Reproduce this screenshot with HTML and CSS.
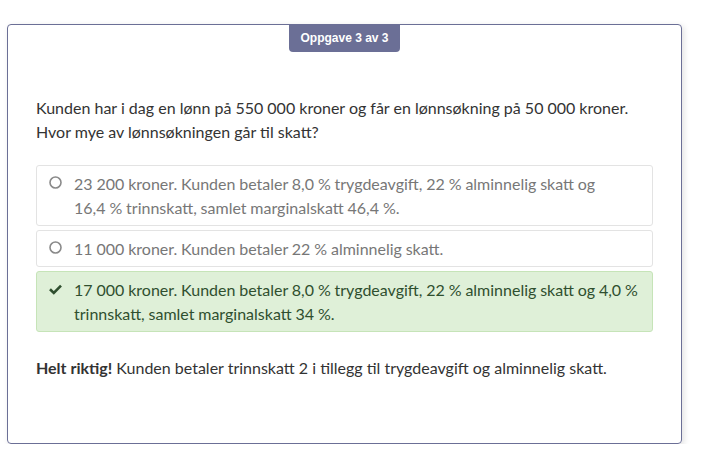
FILE: index.html
```html
<!DOCTYPE html>
<html lang="nb">
<head>
  <meta charset="UTF-8">
  <title>Oppgave 3 av 3</title>
  <link rel="stylesheet" href="styles.css">
</head>
<body>
  <div class="quiz-card">
    <div class="step-badge">Oppgave 3 av 3</div>

    <p class="question">Kunden har i dag en lønn på 550&#8239;000 kroner og får en lønnsøkning på 50&#8239;000 kroner.<br>Hvor mye av lønnsøkningen går til skatt?</p>

    <div class="options">
      <div class="option">
        <span class="opt-icon">
          <svg width="13" height="13" viewBox="0 0 13 13"><circle cx="6.5" cy="6.5" r="5.5" fill="none" stroke="#8a8a8a" stroke-width="1.6"/></svg>
        </span>
        <span class="opt-text">23&#8239;200 kroner. Kunden betaler 8,0&#8239;% trygdeavgift, 22&#8239;% alminnelig skatt og 16,4&#8239;% trinnskatt, samlet marginalskatt 46,4&#8239;%.</span>
      </div>
      <div class="option">
        <span class="opt-icon">
          <svg width="13" height="13" viewBox="0 0 13 13"><circle cx="6.5" cy="6.5" r="5.5" fill="none" stroke="#8a8a8a" stroke-width="1.6"/></svg>
        </span>
        <span class="opt-text">11&#8239;000 kroner. Kunden betaler 22&#8239;% alminnelig skatt.</span>
      </div>
      <div class="option correct">
        <span class="opt-icon">
          <svg width="13" height="11" viewBox="0 0 13 11"><path d="M1 5.3 L4.8 9 L12 1.6" fill="none" stroke="#2f4f2f" stroke-width="2.6"/></svg>
        </span>
        <span class="opt-text">17&#8239;000 kroner. Kunden betaler 8,0&#8239;% trygdeavgift, 22&#8239;% alminnelig skatt og 4,0&#8239;% trinnskatt, samlet marginalskatt 34&#8239;%.</span>
      </div>
    </div>

    <p class="feedback"><strong>Helt riktig!</strong> Kunden betaler trinnskatt 2 i tillegg til trygdeavgift og alminnelig skatt.</p>
  </div>
</body>
</html>
```

FILE: styles.css
```css
body {
  margin: 0;
  padding: 24px 0 0 7px;
  font-family: "Lato", "Liberation Sans", sans-serif;
  color: #333;
  background: #fff;
}

.quiz-card {
  box-sizing: border-box;
  width: 675px;
  height: 420px;
  border: 1px solid #6b6f96;
  border-radius: 4px;
  box-shadow: 2px 2px 6px rgba(0, 0, 0, 0.12);
  padding: 0 28px;
}

.step-badge {
  width: fit-content;
  margin: -1px auto 0;
  background-color: #6b6f96;
  color: #fff;
  font-family: "Liberation Sans", Arial, sans-serif;
  font-weight: bold;
  font-size: 12px;
  padding: 7px 11px;
  border-radius: 0 0 4px 4px;
}

.question {
  margin: 44px 0 21px;
  font-size: 16px;
  line-height: 24px;
}

.options {
  display: flex;
  flex-direction: column;
  gap: 4px;
}

.option {
  display: flex;
  gap: 12px;
  align-items: flex-start;
  border: 1px solid #e3e3e3;
  border-radius: 3px;
  padding: 6px 12px 5px;
  font-size: 16px;
  line-height: 24px;
  word-spacing: -0.3px;
  color: #777;
}

.opt-icon {
  flex: 0 0 13px;
  display: flex;
  padding-top: 4px;
}

.option.correct {
  background-color: #dff0d8;
  border-color: #c6e4b8;
  color: #2f4f2f;
}

.option.correct .opt-icon {
  padding-top: 6px;
}

.feedback {
  margin: 24px 0 0;
  font-size: 16px;
  line-height: 24px;
}
```
